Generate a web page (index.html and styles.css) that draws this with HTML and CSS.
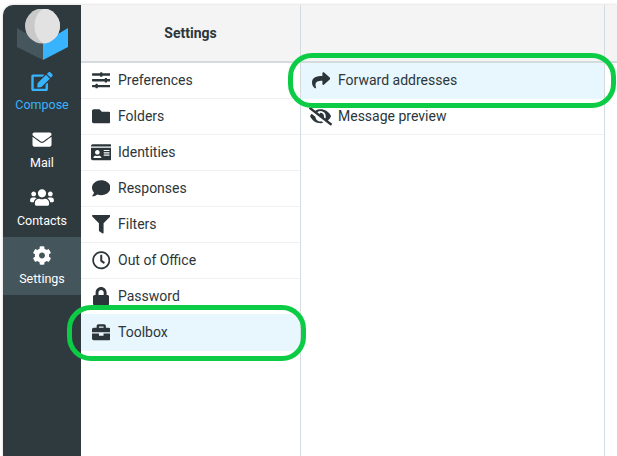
FILE: index.html
```html
<!DOCTYPE html>
<html lang="en">
<head>
  <meta charset="UTF-8" />
  <title>Settings</title>
  <link rel="stylesheet" href="styles.css">
</head>
<body>

<div class="layout">

  <!-- Main menu -->
  <div class="taskmenu">
    <div class="logo">
      <svg width="52" height="52" viewBox="0 0 52 52">
        <defs><clipPath id="ball"><circle cx="26.5" cy="17" r="17.5"/></clipPath></defs>
        <polygon points="1,19 27,34 27,51 1,38" fill="#45565c"/>
        <polygon points="27,34 52,19 52,38 27,51" fill="#37b4fd"/>
        <circle cx="26.5" cy="17" r="17.5" fill="#c9c9c9"/>
        <ellipse cx="31.5" cy="17" rx="13" ry="18" fill="#e2e2e2" clip-path="url(#ball)"/>
      </svg>
    </div>
    <a class="task active-blue">
      <svg class="task-icon" viewBox="0 0 576 512"><path d="M402.6 83.2l90.2 90.2c3.8 3.8 3.8 10 0 13.8L274.4 405.6l-92.8 10.3c-12.4 1.4-22.9-9.1-21.5-21.5l10.3-92.8L388.8 83.2c3.8-3.8 10-3.8 13.8 0zm162-22.9l-48.8-48.8c-15.2-15.2-39.9-15.2-55.2 0l-35.4 35.4c-3.8 3.8-3.8 10 0 13.8l90.2 90.2c3.8 3.8 10 3.8 13.8 0l35.4-35.4c15.2-15.3 15.2-40 0-55.2zM384 346.2V448H64V128h229.8c3.2 0 6.2-1.3 8.5-3.5l40-40c7.6-7.6 2.2-20.5-8.5-20.5H48C21.5 64 0 85.5 0 112v352c0 26.5 21.5 48 48 48h352c26.5 0 48-21.5 48-48V306.2c0-10.7-12.9-16-20.5-8.5l-40 40c-2.2 2.3-3.5 5.3-3.5 8.5z"/></svg>
      <span>Compose</span>
    </a>
    <a class="task">
      <svg class="task-icon" viewBox="0 0 512 512"><path d="M502.3 190.8c3.9-3.1 9.7-.2 9.7 4.7V400c0 26.5-21.5 48-48 48H48c-26.5 0-48-21.5-48-48V195.6c0-5 5.7-7.8 9.7-4.7 22.4 17.4 52.1 39.5 154.1 113.6 21.1 15.4 56.7 47.8 92.2 47.6 35.7.3 71.3-32.8 92.3-47.6 102-74.1 131.6-96.3 154-113.7zM256 320c23.2.4 56.6-29.2 73.4-41.4 132.7-96.3 142.8-104.7 173.4-128.7 5.8-4.5 9.2-11.5 9.2-18.9v-19c0-26.5-21.5-48-48-48H48C21.5 64 0 85.5 0 112v19c0 7.4 3.4 14.3 9.2 18.9 30.6 23.9 40.7 32.4 173.4 128.7 16.8 12.2 50.2 41.8 73.4 41.4z"/></svg>
      <span>Mail</span>
    </a>
    <a class="task">
      <svg class="task-icon" viewBox="0 0 640 512"><path d="M96 224c35.3 0 64-28.7 64-64s-28.7-64-64-64-64 28.7-64 64 28.7 64 64 64zm448 0c35.3 0 64-28.7 64-64s-28.7-64-64-64-64 28.7-64 64 28.7 64 64 64zm32 32h-64c-17.6 0-33.5 7.1-45.1 18.6 40.3 22.1 68.9 62 75.1 109.4h66c17.7 0 32-14.3 32-32v-32c0-35.3-28.7-64-64-64zm-256 0c61.9 0 112-50.1 112-112S381.9 32 320 32 208 82.1 208 144s50.1 112 112 112zm76.8 32h-8.3c-20.8 10-43.9 16-68.5 16s-47.6-6-68.5-16h-8.3C179.6 288 128 339.6 128 403.2V432c0 26.5 21.5 48 48 48h288c26.5 0 48-21.5 48-48v-28.8c0-63.6-51.6-115.2-115.2-115.2zm-223.7-13.4C161.5 263.1 145.6 256 128 256H64c-35.3 0-64 28.7-64 64v32c0 17.7 14.3 32 32 32h65.9c6.3-47.4 34.9-87.3 75.2-109.4z"/></svg>
      <span>Contacts</span>
    </a>
    <a class="task selected">
      <svg class="task-icon" viewBox="0 0 512 512"><path d="M487.4 315.7l-42.6-24.6c4.3-23.2 4.3-47 0-70.2l42.6-24.6c4.9-2.8 7.1-8.6 5.5-14-11.1-35.6-30-67.8-54.7-94.6-3.8-4.1-10-5.1-14.8-2.3L380.8 110c-17.9-15.4-38.5-27.3-60.8-35.1V25.8c0-5.6-3.9-10.5-9.4-11.7-36.7-8.2-74.3-7.8-109.2 0-5.5 1.2-9.4 6.1-9.4 11.7V75c-22.2 7.9-42.8 19.8-60.8 35.1L88.7 85.5c-4.9-2.8-11-1.9-14.8 2.3-24.7 26.7-43.6 58.9-54.7 94.6-1.7 5.4.6 11.2 5.5 14L67.3 221c-4.3 23.2-4.3 47 0 70.2l-42.6 24.6c-4.9 2.8-7.1 8.6-5.5 14 11.1 35.6 30 67.8 54.7 94.6 3.8 4.1 10 5.1 14.8 2.3l42.6-24.6c17.9 15.4 38.5 27.3 60.8 35.1v49.2c0 5.6 3.9 10.5 9.4 11.7 36.7 8.2 74.3 7.8 109.2 0 5.5-1.2 9.4-6.1 9.4-11.7v-49.2c22.2-7.9 42.8-19.8 60.8-35.1l42.6 24.6c4.9 2.8 11 1.9 14.8-2.3 24.7-26.7 43.6-58.9 54.7-94.6 1.5-5.5-.7-11.3-5.6-14.1zM256 336c-44.1 0-80-35.9-80-80s35.9-80 80-80 80 35.9 80 80-35.9 80-80 80z"/></svg>
      <span>Settings</span>
    </a>
  </div>

  <!-- Sections -->
  <div class="column sections">
    <div class="column-head">Settings</div>
    <a class="row">
      <span class="row-icon"><svg viewBox="0 0 512 512"><path d="M496 384H160v-16c0-8.8-7.2-16-16-16h-32c-8.8 0-16 7.2-16 16v16H16c-8.8 0-16 7.2-16 16v32c0 8.8 7.2 16 16 16h80v16c0 8.8 7.2 16 16 16h32c8.8 0 16-7.2 16-16v-16h336c8.8 0 16-7.2 16-16v-32c0-8.8-7.2-16-16-16zm0-160h-80v-16c0-8.8-7.2-16-16-16h-32c-8.8 0-16 7.2-16 16v16H16c-8.8 0-16 7.2-16 16v32c0 8.8 7.2 16 16 16h336v16c0 8.8 7.2 16 16 16h32c8.8 0 16-7.2 16-16v-16h80c8.8 0 16-7.2 16-16v-32c0-8.8-7.2-16-16-16zm0-160H288V48c0-8.8-7.2-16-16-16h-32c-8.8 0-16 7.2-16 16v16H16C7.2 64 0 71.2 0 80v32c0 8.8 7.2 16 16 16h208v16c0 8.8 7.2 16 16 16h32c8.8 0 16-7.2 16-16v-16h208c8.8 0 16-7.2 16-16V80c0-8.8-7.2-16-16-16z"/></svg></span>
      Preferences
    </a>
    <a class="row">
      <span class="row-icon"><svg viewBox="0 0 512 512"><path d="M464 128H272l-64-64H48C21.49 64 0 85.49 0 112v288c0 26.51 21.49 48 48 48h416c26.51 0 48-21.49 48-48V176c0-26.51-21.49-48-48-48z"/></svg></span>
      Folders
    </a>
    <a class="row">
      <span class="row-icon"><svg viewBox="0 0 576 512"><path d="M528 32H48C21.5 32 0 53.5 0 80v16h576V80c0-26.5-21.5-48-48-48zM0 432c0 26.5 21.5 48 48 48h480c26.5 0 48-21.5 48-48V128H0v304zm352-232c0-4.4 3.6-8 8-8h144c4.4 0 8 3.6 8 8v16c0 4.4-3.6 8-8 8H360c-4.4 0-8-3.6-8-8v-16zm0 64c0-4.4 3.6-8 8-8h144c4.4 0 8 3.6 8 8v16c0 4.4-3.6 8-8 8H360c-4.4 0-8-3.6-8-8v-16zm0 64c0-4.4 3.6-8 8-8h144c4.4 0 8 3.6 8 8v16c0 4.4-3.6 8-8 8H360c-4.4 0-8-3.6-8-8v-16zM176 192c35.3 0 64 28.7 64 64s-28.7 64-64 64-64-28.7-64-64 28.7-64 64-64zM67.1 396.2C75.5 370.5 99.6 352 128 352h8.2c12.3 5.1 25.7 8 39.8 8s27.6-2.9 39.8-8h8.2c28.4 0 52.5 18.5 60.9 44.2 3.2 9.9-5.2 19.8-15.6 19.8H82.7c-10.4 0-18.8-10-15.6-19.8z"/></svg></span>
      Identities
    </a>
    <a class="row">
      <span class="row-icon"><svg viewBox="0 0 512 512"><path d="M256 32C114.6 32 0 125.1 0 240c0 49.6 21.4 95 57 130.7C44.5 421.1 2.7 466 2.2 466.5c-2.2 2.3-2.8 5.7-1.5 8.7S4.8 480 8 480c66.3 0 116-31.8 140.6-51.4 32.7 12.3 69 19.4 107.4 19.4 141.4 0 256-93.1 256-208S397.4 32 256 32z"/></svg></span>
      Responses
    </a>
    <a class="row">
      <span class="row-icon"><svg viewBox="0 0 512 512"><path d="M487.976 0H24.028C2.71 0-8.047 25.866 7.058 40.971L192 225.941V432c0 7.831 3.821 15.17 10.237 19.662l80 55.98C298.02 518.69 320 507.493 320 487.98V225.941l184.947-184.97C520.021 25.896 509.338 0 487.976 0z"/></svg></span>
      Filters
    </a>
    <a class="row">
      <span class="row-icon"><svg viewBox="0 0 512 512"><path d="M256 8C119 8 8 119 8 256s111 248 248 248 248-111 248-248S393 8 256 8zm0 448c-110.5 0-200-89.5-200-200S145.5 56 256 56s200 89.5 200 200-89.5 200-200 200zm61.8-104.4l-84.9-61.7c-3.1-2.3-4.9-5.9-4.9-9.7V116c0-6.6 5.4-12 12-12h32c6.6 0 12 5.4 12 12v141.7l66.8 48.6c5.4 3.9 6.5 11.4 2.6 16.8L334.6 349c-3.9 5.3-11.4 6.5-16.8 2.6z"/></svg></span>
      Out of Office
    </a>
    <a class="row">
      <span class="row-icon"><svg viewBox="0 0 448 512"><path d="M400 224h-24v-72C376 68.2 307.8 0 224 0S72 68.2 72 152v72H48c-26.5 0-48 21.5-48 48v192c0 26.5 21.5 48 48 48h352c26.5 0 48-21.5 48-48V272c0-26.5-21.5-48-48-48zm-104 0H152v-72c0-39.7 32.3-72 72-72s72 32.3 72 72v72z"/></svg></span>
      Password
    </a>
    <a class="row selected">
      <span class="row-icon"><svg viewBox="0 0 512 512"><path d="M320 336c0 8.84-7.16 16-16 16h-96c-8.84 0-16-7.16-16-16v-48H0v144c0 25.6 22.4 48 48 48h416c25.6 0 48-22.4 48-48V288H320v48zm144-208h-80V80c0-25.6-22.4-48-48-48H176c-25.6 0-48 22.4-48 48v48H48c-25.6 0-48 22.4-48 48v80h512v-80c0-25.6-22.4-48-48-48zm-144 0H192V96h128v32z"/></svg></span>
      Toolbox
    </a>
  </div>

  <!-- Toolbox list -->
  <div class="column tools">
    <div class="column-head"></div>
    <a class="row selected">
      <span class="row-icon"><svg viewBox="0 0 512 512"><path d="M503.691 189.836L327.687 37.851C312.281 24.546 288 35.347 288 56.015v80.053C127.371 137.907 0 170.1 0 322.326c0 61.441 39.581 122.309 83.333 154.132 13.653 9.931 33.111-2.533 28.077-18.631C66.066 312.814 132.917 274.316 288 272.085V360c0 20.7 24.3 31.453 39.687 18.164l176.004-152c11.071-9.562 11.086-26.753 0-36.328z"/></svg></span>
      Forward addresses
    </a>
    <a class="row">
      <span class="row-icon"><svg viewBox="0 0 640 512"><path d="M320 400c-75.85 0-137.25-58.71-142.9-133.11L72.2 185.82c-13.79 17.3-26.48 35.59-36.72 55.59a32.35 32.35 0 0 0 0 29.19C89.71 376.41 197.07 448 320 448c26.91 0 52.87-4 77.89-10.46L346 397.39a144.13 144.13 0 0 1-26 2.61zm313.75 58.1l-110.55-85.44a331.25 331.25 0 0 0 81.25-102.07 32.35 32.35 0 0 0 0-29.19C550.29 135.59 442.93 64 320 64a308.15 308.15 0 0 0-147.32 37.7L45.46 3.37A16 16 0 0 0 23 6.18L3.37 31.45A16 16 0 0 0 6.18 53.9l588.36 454.73a16 16 0 0 0 22.46-2.81l19.64-25.27a16 16 0 0 0-2.89-22.45zm-183.72-142l-39.3-30.38A94.75 94.75 0 0 0 416 256a94.76 94.76 0 0 0-121.31-92.21A47.65 47.65 0 0 1 304 192a46.64 46.64 0 0 1-1.54 10l-73.61-56.89A142.31 142.31 0 0 1 320 112a143.92 143.92 0 0 1 144 144c0 21.63-5.29 41.79-13.97 60.11z"/></svg></span>
      Message preview
    </a>
  </div>

  <!-- Right edge of the next column -->
  <div class="column rest">
    <div class="column-head"></div>
  </div>

</div>

<!-- Green markers drawn on top of the screenshot -->
<div class="marker marker-toolbox"></div>
<div class="marker marker-forward"></div>

</body>
</html>
```

FILE: styles.css
```css
html, body {
  height: 100%;
}

body {
  margin: 0;
  padding: 5px 0 0 3px;
  box-sizing: border-box;
  background: #fff;
  overflow: hidden;
  font-family: Roboto, sans-serif;
  font-size: 14px;
  color: #2c363a;
}

.layout {
  display: flex;
  height: 100%;
  background: #fff;
  box-shadow: 0 0 3px rgba(0,0,0,0.2);
  border-top-left-radius: 10px;
}

/* main menu */
.taskmenu {
  width: 78px;
  flex: none;
  background: #2f3a3f;
  border-top-left-radius: 10px;
}

.logo {
  height: 58px;
  display: flex;
  justify-content: center;
  padding-top: 4px;
  box-sizing: border-box;
}

.task {
  height: 58px;
  padding-top: 9px;
  box-sizing: border-box;
  display: flex;
  flex-direction: column;
  align-items: center;
  gap: 5px;
  color: #fff;
  font-size: 12.5px;
  line-height: 18px;
}

.task-icon {
  height: 19px;
  width: 24px;
  flex: none;
  fill: currentColor;
}

.active-blue { color: #37b4fd; }
.task.selected { background: #45555c; }

/* list columns */
.column {
  flex: none;
  box-sizing: border-box;
  border-right: 1px solid #d4dbde;
}

.sections { width: 220px; }
.tools { width: 304px; }
.rest { flex: 1; border-right: none; }

.column-head {
  height: 58px;
  background: #f4f4f4;
  border-bottom: 2px solid #d4dbde;
  box-sizing: border-box;
  text-align: center;
  font-weight: 700;
  line-height: 56px;
}

.row {
  display: flex;
  align-items: center;
  height: 36px;
  padding-left: 10px;
  box-sizing: border-box;
  border-bottom: 1px solid #f0f0f0;
  line-height: 35px;
}

.row.selected {
  background: #e8f6fd;
  border-bottom-color: #e8f6fd;
}

.sections .row.selected {
  box-shadow: 0 -1px 0 #e8f6fd;
}

.row-icon {
  width: 20px;
  margin-right: 7px;
  flex: none;
  display: flex;
  justify-content: center;
}

.row-icon svg {
  height: 18.5px;
  flex: none;
  fill: #2c363a;
}

/* green outlines */
.marker {
  position: absolute;
  box-sizing: border-box;
  border: 5px solid #0ccc46;
  border-radius: 24px;
}

.marker-toolbox {
  left: 67px;
  top: 305px;
  width: 239px;
  height: 56px;
}

.marker-forward {
  left: 288px;
  top: 53px;
  width: 328px;
  height: 55px;
}
```
